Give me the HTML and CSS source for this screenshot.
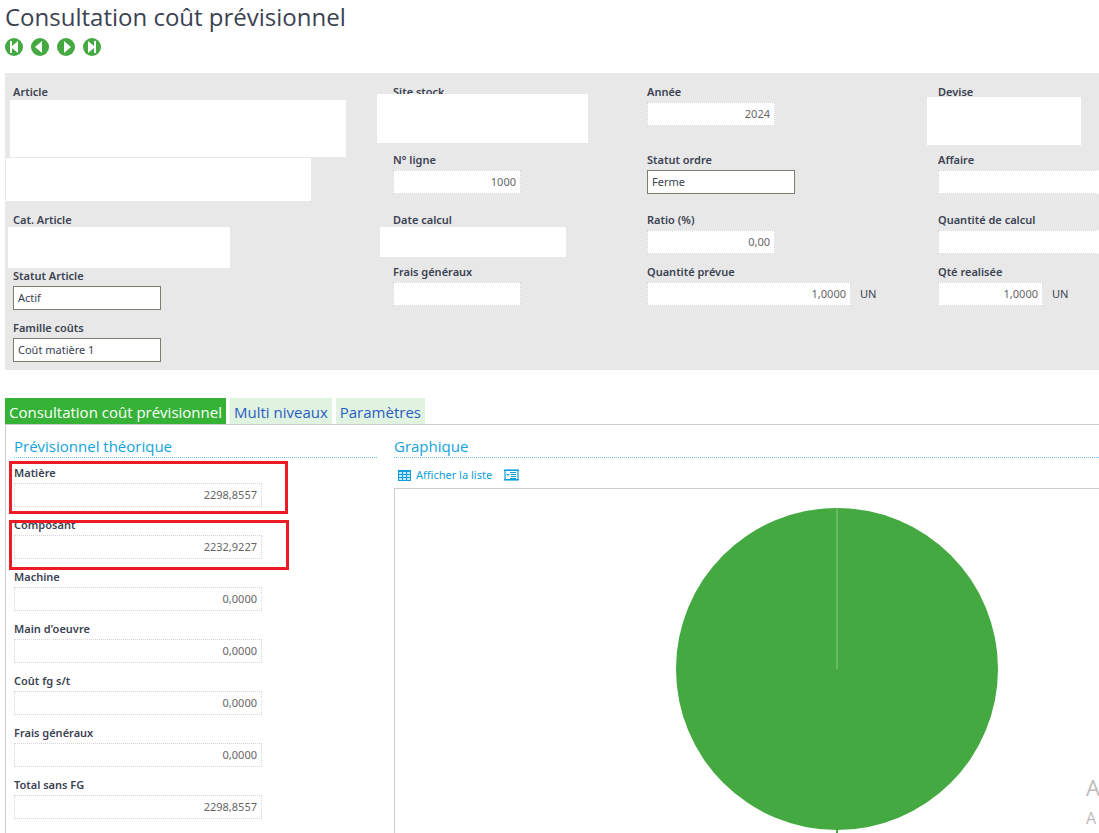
FILE: index.html
```html
<!DOCTYPE html>
<html lang="fr">
<head>
<meta charset="utf-8">
<meta name="viewport" content="width=device-width, initial-scale=1">
<title>Consultation coût prévisionnel</title>
<link rel="stylesheet" href="styles.css">
</head>
<body>
<header class="page-header">
  <h1 class="page-title">Consultation coût prévisionnel</h1>
  <nav class="record-nav" aria-label="Enregistrements">
    <button class="nav-btn" type="button" aria-label="Premier"><svg viewBox="0 0 18 18"><circle cx="9" cy="9" r="9" fill="#43a940"/><path d="M5 3h2v5l6-5v12L7 10v5H5z" fill="#fff"/></svg></button>
    <button class="nav-btn" type="button" aria-label="Précédent"><svg viewBox="0 0 18 18"><circle cx="9" cy="9" r="9" fill="#43a940"/><path d="M11 3v12L4 9z" fill="#fff"/></svg></button>
    <button class="nav-btn" type="button" aria-label="Suivant"><svg viewBox="0 0 18 18"><circle cx="9" cy="9" r="9" fill="#43a940"/><path d="M7 3v12l7-6z" fill="#fff"/></svg></button>
    <button class="nav-btn" type="button" aria-label="Dernier"><svg viewBox="0 0 18 18"><circle cx="9" cy="9" r="9" fill="#43a940"/><path d="M5 3l6 5V3h2v12h-2v-5l-6 5z" fill="#fff"/></svg></button>
  </nav>
</header>

<section class="summary">
  <div class="summary-col">
    <div class="field field-double">
      <label class="label" for="article">Article</label>
      <input class="input w-md" id="article" readonly>
      <span class="mask mask-article"></span>
      <span class="mask mask-designation"></span>
    </div>
    <div class="field field-cat">
      <label class="label" for="cat">Cat. Article</label>
      <input class="input w-sm" id="cat" readonly>
      <span class="mask mask-cat"></span>
    </div>
    <div class="field">
      <label class="label" for="statut-article">Statut Article</label>
      <select class="input choice" id="statut-article"><option>Actif</option></select>
    </div>
    <div class="field">
      <label class="label" for="famille">Famille coûts</label>
      <select class="input choice" id="famille"><option>Coût matière 1</option></select>
    </div>
  </div>
  <div class="summary-col">
    <div class="field field-tall">
      <label class="label" for="site">Site stock</label>
      <input class="input w-sm" id="site" readonly>
      <span class="mask mask-site"></span>
    </div>
    <div class="field field-mid">
      <label class="label" for="ligne">N° ligne</label>
      <input class="input w-sm" id="ligne" value="1000" readonly>
    </div>
    <div class="field">
      <label class="label" for="date">Date calcul</label>
      <input class="input w-sm" id="date" readonly>
      <span class="mask mask-date"></span>
    </div>
    <div class="field">
      <label class="label" for="frais">Frais généraux</label>
      <input class="input w-sm" id="frais" readonly>
    </div>
  </div>
  <div class="summary-col">
    <div class="field field-tall">
      <label class="label" for="annee">Année</label>
      <input class="input w-sm" id="annee" value="2024" readonly>
    </div>
    <div class="field field-mid">
      <label class="label" for="statut-ordre">Statut ordre</label>
      <select class="input choice" id="statut-ordre"><option>Ferme</option></select>
    </div>
    <div class="field">
      <label class="label" for="ratio">Ratio (%)</label>
      <input class="input w-sm" id="ratio" value="0,00" readonly>
    </div>
    <div class="field">
      <label class="label" for="prevue">Quantité prévue</label>
      <div class="with-unit"><input class="input w-md" id="prevue" value="1,0000" readonly><span class="unit">UN</span></div>
    </div>
  </div>
  <div class="summary-col">
    <div class="field field-tall">
      <label class="label" for="devise">Devise</label>
      <input class="input w-sm" id="devise" readonly>
      <span class="mask mask-devise"></span>
    </div>
    <div class="field field-mid">
      <label class="label" for="affaire">Affaire</label>
      <input class="input w-md" id="affaire" readonly>
    </div>
    <div class="field">
      <label class="label" for="qte-calcul">Quantité de calcul</label>
      <input class="input w-md" id="qte-calcul" readonly>
    </div>
    <div class="field">
      <label class="label" for="realisee">Qté realisée</label>
      <div class="with-unit"><input class="input w-xs" id="realisee" value="1,0000" readonly><span class="unit">UN</span></div>
    </div>
  </div>
</section>

<nav class="tabs">
  <a class="tab tab-active" href="#consultation">Consultation coût prévisionnel</a>
  <a class="tab" href="#niveaux">Multi niveaux</a>
  <a class="tab" href="#parametres">Paramètres</a>
</nav>

<main class="tab-panel" id="consultation">
  <section class="costs">
    <h2 class="section-title">Prévisionnel théorique</h2>
    <div class="field"><label class="label" for="matiere">Matière</label><input class="input w-lg" id="matiere" value="2298,8557" readonly><span class="highlight highlight-matiere"></span></div>
    <div class="field"><label class="label" for="composant">Composant</label><input class="input w-lg" id="composant" value="2232,9227" readonly><span class="highlight highlight-composant"></span></div>
    <div class="field"><label class="label" for="machine">Machine</label><input class="input w-lg" id="machine" value="0,0000" readonly></div>
    <div class="field"><label class="label" for="oeuvre">Main d'oeuvre</label><input class="input w-lg" id="oeuvre" value="0,0000" readonly></div>
    <div class="field"><label class="label" for="fgst">Coût fg s/t</label><input class="input w-lg" id="fgst" value="0,0000" readonly></div>
    <div class="field"><label class="label" for="fg">Frais généraux</label><input class="input w-lg" id="fg" value="0,0000" readonly></div>
    <div class="field"><label class="label" for="total">Total sans FG</label><input class="input w-lg" id="total" value="2298,8557" readonly></div>
  </section>
  <section class="graph">
    <h2 class="section-title">Graphique</h2>
    <div class="toolbar">
      <button class="tool" type="button">
        <svg width="13" height="12" viewBox="0 0 13 12"><path d="M1 1h11v10H1z" fill="#c4e8f7"/><path d="M0 1h13v2H0zM0 5h13v1H0zM0 8h13v1H0zM0 11h13v1H0zM0 3h1v8H0zM4 3h1v8H4zM8 3h1v8H8zM12 3h1v8h-1z" fill="#109fdb"/></svg>
        Afficher la liste
      </button>
      <button class="tool" type="button" aria-label="Options">
        <svg width="15" height="12" viewBox="0 0 15 12"><rect width="15" height="12" rx="1" fill="#6ac6ea"/><path d="M2 2h11v8H2z" fill="#fff"/><path d="M0 1h15v1H0zM0 10h15v1H0zM6 3h6v1H6zM7 5h5v1H7zM7 7h5v1H7zM6 9h6v1H6zM2 5h4L4 7z" fill="#109fdb"/></svg>
      </button>
    </div>
    <div class="chart">
      <svg class="pie" width="322" height="345" viewBox="0 0 322 345" role="img" aria-label="Graphique en secteurs"><circle cx="161" cy="161" r="161" fill="#43a940"/><path d="M161 0v161" stroke="#8ccb8a" stroke-width="1"/><path d="M161 321v24" stroke="#43a940" stroke-width="2"/></svg>
    </div>
  </section>
</main>
<aside class="watermark"><p class="watermark-title">A</p><p class="watermark-text">A</p></aside>
</body>
</html>
```
FILE: styles.css
```css
* { box-sizing: border-box; }

body {
  margin: 0;
  height: 100vh;
  padding-left: 5px;
  display: flex;
  flex-direction: column;
  overflow: hidden;
  background: #fff;
  color: #3b4252;
  font-family: "Noto Sans", "Open Sans", sans-serif;
  font-size: 11px;
  line-height: 16px;
}

button { border: 0; padding: 0; background: none; font: inherit; }

.page-title, .tab, .section-title, .watermark { font-family: "Open Sans", "Noto Sans", sans-serif; }

.page-header { flex: none; height: 73px; }
.page-title { margin: 0; font-size: 24px; font-weight: 400; line-height: 34px; white-space: nowrap; }
.record-nav { display: flex; gap: 8px; padding-top: 4px; }
.nav-btn { width: 18px; height: 18px; }
.nav-btn svg { display: block; }

.summary {
  flex: none;
  display: grid;
  grid-template-columns: 380fr 254fr 291fr 161fr;
  padding: 11px 0 8px 8px;
  background: #e8e8e8;
}
.summary-col { min-width: 0; }

.field { position: relative; min-height: 52px; }
.field-cat { min-height: 56px; }
.field-mid { min-height: 60px; }
.field-tall { min-height: 68px; }
.field-double { min-height: 128px; }
.summary-col .field:last-child { min-height: 42px; }

.label { display: block; margin-bottom: 2px; font-weight: 600; white-space: nowrap; }
.input {
  display: block;
  height: 24px;
  padding: 0 4px 2px;
  border: 1px dotted #d6d6d6;
  border-radius: 0;
  background: #fff;
  color: #666;
  font: inherit;
  text-align: right;
}
.choice {
  width: 148px;
  padding: 0 4px;
  appearance: none;
  border: 1px solid #75806f;
  color: #3b4252;
  text-align: left;
}
.w-xs { width: 105px; }
.w-sm { width: 128px; }
.w-md { width: 204px; }
.w-lg { width: 248px; }
.with-unit { display: flex; align-items: center; gap: 9px; }

.mask { position: absolute; background: #fff; }
.mask-article { left: -3px; top: 16px; width: 336px; height: 57px; }
.mask-designation { left: -7px; top: 74px; width: 305px; height: 43px; }
.mask-cat { left: -5px; top: 15px; width: 222px; height: 41px; }
.mask-site { left: -16px; top: 10px; width: 211px; height: 49px; }
.mask-date { left: -13px; top: 15px; width: 186px; height: 30px; }
.mask-devise { left: -11px; top: 13px; width: 154px; height: 48px; }

.tabs { flex: none; display: flex; gap: 4px; padding-top: 28px; }
.tab {
  padding: 2px 4px 0;
  background: #e0f3e0;
  color: #2a5cc4;
  font-size: 15px;
  line-height: 24px;
  text-decoration: none;
  white-space: nowrap;
}
.tab-active { background: #36b336; color: #fff; }

.tab-panel {
  flex: 1;
  min-height: 0;
  display: grid;
  grid-template-columns: 363fr 705fr;
  gap: 17px;
  padding: 9px 0 0 8px;
  border-top: 1px solid #ccc;
  border-left: 1px solid #ccc;
}
.costs, .graph { min-width: 0; }
.section-title {
  margin: 0 0 7px;
  padding-top: 1px;
  border-bottom: 1px dotted #6cc5e6;
  color: #12a3dc;
  font-size: 15px;
  font-weight: 400;
  line-height: 22px;
}
.highlight { position: absolute; border: 3px solid #ed1c24; pointer-events: none; }
.highlight-matiere { left: -5px; top: -4px; width: 279px; height: 53px; }
.highlight-composant { left: -5px; top: 3px; width: 280px; height: 50px; }

.graph { display: flex; flex-direction: column; }
.toolbar { display: flex; gap: 12px; padding: 2px 0 5px 4px; }
.tool { display: flex; align-items: center; gap: 5px; color: #109fdb; }
.chart {
  flex: 1;
  min-height: 0;
  overflow: hidden;
  padding: 19px 0 0 281px;
  border-top: 1px solid #ccc;
  border-left: 1px solid #ccc;
}
.pie { display: block; }

.watermark {
  position: absolute;
  right: 0;
  bottom: 0;
  width: 13px;
  overflow: hidden;
  color: #bcbcbc;
}
.watermark p { margin: 0; }
.watermark-title { font-size: 22px; line-height: 32px; }
.watermark-text { font-size: 16px; line-height: 30px; }
```
